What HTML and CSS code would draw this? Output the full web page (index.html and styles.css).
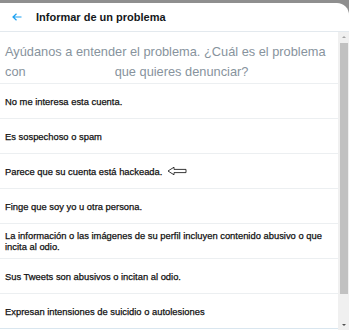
FILE: index.html
```html
<!DOCTYPE html>
<html lang="es">
  <head>
    <meta charset="UTF-8" />
    <meta name="viewport" content="width=device-width, initial-scale=1.0" />
    <title>Informar de un problema</title>
    <link rel="stylesheet" href="styles.css">
  </head>
  <body>
    <div class="modal">
      <div class="header">
        <svg class="back" width="10" height="8" viewBox="0 0 10 8">
          <path d="M9.5 4H1M4.5 0.8L1 4l3.5 3.2" fill="none" stroke="#1da1f2" stroke-width="1.2" />
        </svg>
        <h1>Informar de un problema</h1>
      </div>
      <div class="body">
        <div class="content">
          <div class="prompt">
            <div>Ayúdanos a entender el problema. ¿Cuál es el problema</div>
            <div class="second">
              <span>con</span>
              <span>que quieres denunciar?</span>
            </div>
          </div>
          <ul class="options">
            <li>No me interesa esta cuenta.</li>
            <li>Es sospechoso o spam</li>
            <li>
              Parece que su cuenta está hackeada.
              <svg class="pointer" width="20" height="10" viewBox="0 0 20 10">
                <path d="M1 5L7 1.2V3.4H19V6.6H7V8.8Z" fill="#fff" stroke="#222" stroke-width="0.9" stroke-linejoin="round" />
              </svg>
            </li>
            <li>Finge que soy yo u otra persona.</li>
            <li>La información o las imágenes de su perfil incluyen contenido abusivo o que incita al odio.</li>
            <li>Sus Tweets son abusivos o incitan al odio.</li>
            <li>Expresan intensiones de suicidio o autolesiones</li>
          </ul>
        </div>
        <div class="scrollbar">
          <div class="arrow up"></div>
          <div class="track">
            <div class="thumb"></div>
          </div>
          <div class="arrow down"></div>
        </div>
      </div>
    </div>
  </body>
</html>
```

FILE: styles.css
```css
html,
body {
  margin: 0;
  height: 330px;
  overflow: hidden;
}
body {
  background-color: #8f8f8f;
  font-family: "Liberation Sans", Arial, sans-serif;
  padding-top: 3px;
  box-sizing: border-box;
}
.modal {
  background-color: #fff;
  border-radius: 0 12px 0 0;
  height: 327px;
  display: flex;
  flex-direction: column;
}
.header {
  height: 28px;
  border-bottom: 1px solid #e3e9ee;
  display: flex;
  align-items: center;
  padding-left: 12px;
}
.back {
  margin-right: 14px;
}
.header h1 {
  margin: 0;
  font-size: 11px;
  font-weight: 700;
  color: #14171a;
}
.body {
  flex: 1;
  display: flex;
}
.content {
  flex: 1;
}
.prompt {
  padding: 10px 5px 1px;
  font-size: 12.8px;
  line-height: 20px;
  color: #87939d;
  border-bottom: 1px solid #eceff1;
}
.second {
  display: flex;
  gap: 89px;
}
.options {
  list-style: none;
  margin: 0;
  padding: 0;
}
.options li {
  min-height: 35px;
  box-sizing: border-box;
  padding: 6px 5px;
  display: flex;
  align-items: center;
  font-size: 9.4px;
  line-height: 11px;
  color: #111;
  -webkit-text-stroke: 0.25px #111;
  border-bottom: 1px solid #eceff1;
}
.options li:last-child {
  border-bottom-color: #d9e6ef;
}
.pointer {
  margin-left: 5px;
}
.scrollbar {
  width: 11px;
  background-color: #f0f0f0;
  display: flex;
  flex-direction: column;
}
.arrow {
  height: 10px;
  display: flex;
  justify-content: center;
  align-items: center;
}
.arrow::before {
  content: "";
  border-left: 2px solid transparent;
  border-right: 2px solid transparent;
}
.up::before {
  border-bottom: 2px solid #a3a3a3;
}
.down::before {
  border-top: 2px solid #505050;
}
.track {
  flex: 1;
  padding: 1px 1px 26px 2px;
  display: flex;
}
.thumb {
  flex: 1;
  background-color: #c1c1c1;
}
```
